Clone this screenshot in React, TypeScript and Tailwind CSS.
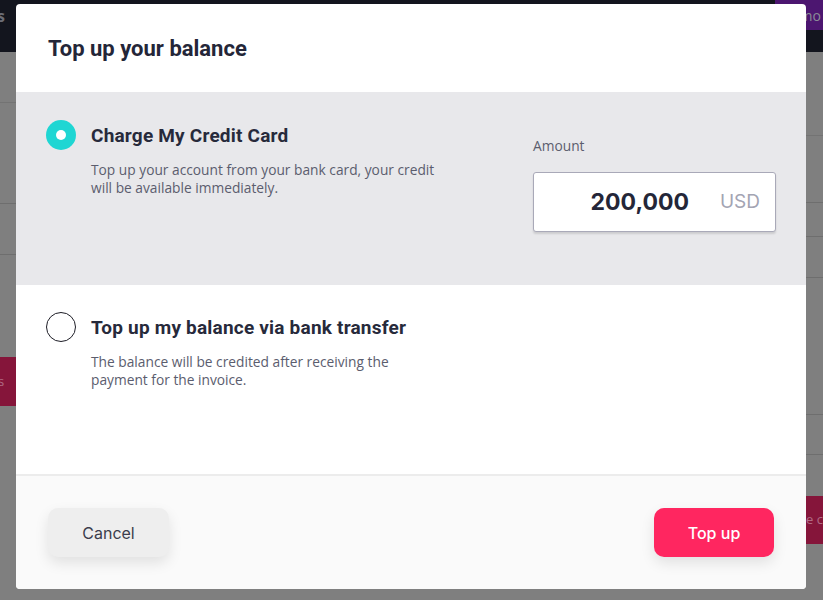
import { useState } from "react";

const heading = "font-['Roboto',_'Liberation_Sans',_sans-serif]";
const body = "font-['Open_Sans',_'Liberation_Sans',_sans-serif]";
const ui = "font-['Inter',_'Liberation_Sans',_sans-serif]";

function Radio({ checked }: { checked: boolean }) {
  if (checked) {
    return (
      <span className="flex h-[30px] w-[30px] shrink-0 items-center justify-center rounded-full bg-[#1fd6d3]">
        <span className="h-[10px] w-[10px] rounded-full bg-white" />
      </span>
    );
  }
  return <span className="h-[30px] w-[30px] shrink-0 rounded-full border border-[#1d1d26] bg-white" />;
}

function Option({
  checked,
  title,
  text,
  onSelect,
}: {
  checked: boolean;
  title: string;
  text: string[];
  onSelect: () => void;
}) {
  return (
    <button type="button" onClick={onSelect} className="flex items-start gap-[15px] text-left">
      <Radio checked={checked} />
      <div className="pt-[3px]">
        <div className={`${heading} text-[19px] font-bold leading-[26px] tracking-[0.2px] text-[#272a3b]`}>{title}</div>
        <div className={`${body} mt-[12px] text-[13.75px] leading-[18px] text-[#5b5d6e]`}>
          {text.map((t) => (
            <div key={t}>{t}</div>
          ))}
        </div>
      </div>
    </button>
  );
}

function Backdrop() {
  return (
    <div className="flex h-[600px] w-[823px] flex-col overflow-hidden bg-[#7f7f7f]">
      <div className="flex h-[52px] shrink-0 items-start justify-between bg-[#13151e]">
        <span className={`${body} -ml-[3px] pt-[4px] text-[16px] font-bold text-[#6b6d76]`}>s</span>
        <div className="flex h-[30px] w-[48px] items-center justify-end bg-[#4c1670] pr-[2px]">
          <span className={`${body} text-[14px] text-[#8a8a96]`}>mo</span>
        </div>
      </div>
      <div className="flex flex-1 justify-between">
        <div className="flex w-[16px] flex-col">
          <div className="h-[51px] border-b border-[#737373]" />
          <div className="h-[101px] border-b border-[#6e6e6e]" />
          <div className="h-[51px] border-b border-[#6e6e6e]" />
          <div className="h-[102px]" />
          <div className="flex h-[49px] items-center bg-[#85153a]">
            <span className={`${body} -ml-[2px] text-[13px] text-[#b06b85]`}>s</span>
          </div>
        </div>
        <div className="flex w-[17px] flex-col">
          <div className="h-[84px] border-b border-[#737373]" />
          <div className="h-[67px] border-b border-[#6e6e6e]" />
          <div className="h-[34px] border-b border-[#6e6e6e]" />
          <div className="h-[41px] border-b border-[#6e6e6e]" />
          <div className="h-[137px] border-b border-[#6e6e6e]" />
          <div className="h-[40px] border-b border-[#6e6e6e]" />
          <div className="h-[41px]" />
          <div className="flex h-[48px] items-center bg-[#85153a]">
            <span className={`${body} text-[13px] text-[#b06b85]`}>e c</span>
          </div>
        </div>
      </div>
    </div>
  );
}

export default function App() {
  const [method, setMethod] = useState<"card" | "bank">("card");

  return (
    <div className="relative h-[600px] w-[823px] overflow-hidden">
      <Backdrop />
      <div className="absolute left-[16px] top-[4px] flex h-[585px] w-[790px] flex-col overflow-hidden rounded-[4px] bg-white">
        <div className="flex h-[88px] shrink-0 items-center px-[32px]">
          <h2 className={`${heading} text-[22px] font-bold text-[#242638]`}>Top up your balance</h2>
        </div>

        <div
          className={`flex h-[193px] shrink-0 justify-between pl-[30px] pr-[30px] pt-[28px] ${
            method === "card" ? "bg-[#e8e8eb]" : "bg-white"
          }`}
        >
          <Option
            checked={method === "card"}
            title="Charge My Credit Card"
            text={["Top up your account from your bank card, your credit", "will be available immediately."]}
            onSelect={() => setMethod("card")}
          />
          {method === "card" && (
            <div className="flex w-[243px] flex-col pt-[16px]">
              <label className={`${body} text-[13.75px] leading-[20px] text-[#5b5d6e]`}>Amount</label>
              <div className="mt-[16px] flex h-[60px] items-center justify-end gap-[31px] rounded-[3px] border border-[#a9a9b8] bg-white pr-[15px] shadow-[0_2px_2px_rgba(0,0,0,0.12)]">
                <span className={`${ui} text-[23px] font-bold text-[#242638]`}>200,000</span>
                <span className={`${ui} text-[19px] text-[#a3a4b3]`}>USD</span>
              </div>
            </div>
          )}
        </div>

        <div
          className={`flex h-[189px] shrink-0 pl-[30px] pt-[27px] ${
            method === "bank" ? "bg-[#e8e8eb]" : "bg-white"
          }`}
        >
          <Option
            checked={method === "bank"}
            title="Top up my balance via bank transfer"
            text={["The balance will be credited after receiving the", "payment for the invoice."]}
            onSelect={() => setMethod("bank")}
          />
        </div>

        <div className="flex flex-1 items-start justify-between border-t-2 border-[#ececec] bg-[#fafafa] px-[32px] pt-[32px]">
          <button
            type="button"
            className={`${ui} h-[49px] w-[121px] rounded-[10px] bg-[#eeeeee] text-[16px] text-[#3b3d4c] shadow-[0_6px_14px_rgba(0,0,0,0.10)]`}
          >
            Cancel
          </button>
          <button
            type="button"
            className={`${ui} h-[49px] w-[120px] rounded-[10px] bg-[#ff2660] text-[16px] font-medium text-white shadow-[0_6px_14px_rgba(0,0,0,0.10)]`}
          >
            Top up
          </button>
        </div>
      </div>
    </div>
  );
}
